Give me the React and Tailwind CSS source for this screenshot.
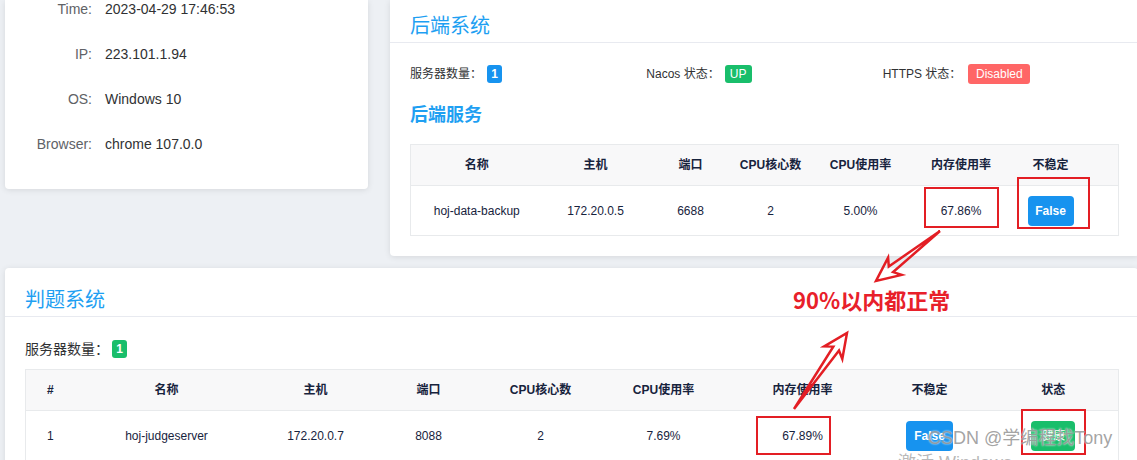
import React from 'react';

const font = "font-['Liberation_Sans','Noto_Sans_CJK_SC',sans-serif]";

// browser info rows of the left card
const clientInfo = [
  { label: 'Time:', value: '2023-04-29 17:46:53' },
  { label: 'IP:', value: '223.101.1.94' },
  { label: 'OS:', value: 'Windows 10' },
  { label: 'Browser:', value: 'chrome 107.0.0' }
];

const backendCols = [
  { title: '名称', w: 'w-[132px]' },
  { title: '主机', w: 'w-[106px]' },
  { title: '端口', w: 'w-[84px]' },
  { title: 'CPU核心数', w: 'w-[76px]' },
  { title: 'CPU使用率', w: 'w-[104px]' },
  { title: '内存使用率', w: 'w-[97px]' },
  { title: '不稳定', w: 'w-[82px]' },
  { title: '', w: 'w-[27px]' }
];

const judgeCols = [
  { title: '#', w: 'w-[45px]' },
  { title: '名称', w: 'w-[192px]' },
  { title: '主机', w: 'w-[106px]' },
  { title: '端口', w: 'w-[120px]' },
  { title: 'CPU核心数', w: 'w-[104px]' },
  { title: 'CPU使用率', w: 'w-[142px]' },
  { title: '内存使用率', w: 'w-[136px]' },
  { title: '不稳定', w: 'w-[118px]' },
  { title: '状态', w: 'w-[130px]' }
];

const Badge = ({ color, children, className = '' }) => (
  <span className={`inline-flex items-center justify-center rounded-[3px] text-[12px] leading-none text-white ${color} ${className}`}>
    {children}
  </span>
);

const CardTitle = ({ children, top }) => (
  <div className={`border-b border-[#e8eaf0] pl-[20px] pb-[6px] ${top}`}>
    <h2 className="text-[20px] leading-[20px] font-normal text-[#1e9ff2]">{children}</h2>
  </div>
);

const HeadCell = ({ children, className = '' }) => (
  <th className={`h-[41px] bg-[#f8f8f9] border-b border-[#e8eaec] text-[12px] font-bold text-[#17233d] text-center ${className}`}>
    {children}
  </th>
);

const BodyCell = ({ children, className = '' }) => (
  <td className={`h-[50px] text-[12px] text-[#17233d] text-center ${className}`}>{children}</td>
);

// hollow hand-drawn style arrow, tail -> tip
const arrowPoints = (tx, ty, px, py) => {
  const dx = px - tx;
  const dy = py - ty;
  const len = Math.hypot(dx, dy);
  const ux = dx / len;
  const uy = dy / len;
  const nx = -uy;
  const ny = ux;
  const L = 19;
  const w = 3.5;
  const h = 11;
  const bx = px - ux * L;
  const by = py - uy * L;
  const pts = [
    [tx, ty],
    [bx + nx * w, by + ny * w],
    [bx - ux * 5 + nx * h, by - uy * 5 + ny * h],
    [px, py],
    [bx - ux * 5 - nx * h, by - uy * 5 - ny * h],
    [bx - nx * w, by - ny * w]
  ];
  return pts.map(([x, y]) => `${x.toFixed(1)},${y.toFixed(1)}`).join(' ');
};

const App = () => {
  return (
    <div className={`relative w-[1137px] h-[460px] overflow-hidden bg-[#edf0f4] ${font}`}>
      <div className="w-[1133px] ml-[5px]">
        {/* top row */}
        <div className="flex items-start gap-[22px]">
          <div className="w-[363px] shrink-0 bg-white rounded-b-[4px] shadow-[0_1px_6px_rgba(0,0,0,0.1)] pl-[20px] pb-[36px] flex flex-col gap-[27px]">
            {clientInfo.map((row) => (
              <div key={row.label} className="flex items-center h-[18px] text-[14px] leading-[18px]">
                <span className="w-[67px] text-right text-[#606266]">{row.label}</span>
                <span className="ml-[13px] text-[#303133]">{row.value}</span>
              </div>
            ))}
          </div>

          <div className="flex-1 bg-white rounded-b-[4px] shadow-[0_1px_6px_rgba(0,0,0,0.1)] pb-[20px]">
            <CardTitle top="pt-[16px]">后端系统</CardTitle>
            <div className="px-[20px]">
              <div className="grid grid-cols-3 mt-[21px] h-[20px] text-[12px] text-[#303133]">
                <div className="flex items-center">
                  <span>服务器数量：</span>
                  <Badge color="bg-[#1793ef]" className="ml-[5px] w-[15px] h-[18px] font-bold">1</Badge>
                </div>
                <div className="flex items-center">
                  <span>Nacos 状态：</span>
                  <Badge color="bg-[#19be6b]" className="ml-[5px] w-[27px] h-[18px]">UP</Badge>
                </div>
                <div className="flex items-center">
                  <span>HTTPS 状态：</span>
                  <Badge color="bg-[#f66]" className="ml-[7px] w-[62px] h-[20px]">Disabled</Badge>
                </div>
              </div>

              <h3 className="mt-[22px] text-[18px] leading-[18px] font-bold text-[#1e9ff2]">后端服务</h3>

              <table className="mt-[20px] w-[708px] table-fixed border-collapse border border-[#e8eaec]">
                <colgroup>
                  {backendCols.map((c, i) => (
                    <col key={i} className={c.w} />
                  ))}
                </colgroup>
                <thead>
                  <tr>
                    {backendCols.map((c, i) => (
                      <HeadCell key={i}>{c.title}</HeadCell>
                    ))}
                  </tr>
                </thead>
                <tbody>
                  <tr>
                    <BodyCell>hoj-data-backup</BodyCell>
                    <BodyCell>172.20.0.5</BodyCell>
                    <BodyCell>6688</BodyCell>
                    <BodyCell>2</BodyCell>
                    <BodyCell>5.00%</BodyCell>
                    <BodyCell>67.86%</BodyCell>
                    <BodyCell>
                      <button className="w-[46px] h-[30px] rounded-[4px] bg-[#1793ef] text-white text-[12px] font-bold">False</button>
                    </BodyCell>
                    <BodyCell />
                  </tr>
                </tbody>
              </table>
            </div>
          </div>
        </div>

        {/* judge system */}
        <div className="mt-[12px] bg-white rounded-t-[4px] shadow-[0_1px_6px_rgba(0,0,0,0.1)] h-[200px]">
          <CardTitle top="pt-[22px]">判题系统</CardTitle>
          <div className="px-[20px]">
            <div className="mt-[23px] h-[18px] flex items-center text-[14px] text-[#303133]">
              <span>服务器数量：</span>
              <Badge color="bg-[#19be6b]" className="ml-[3px] w-[15px] h-[18px] font-bold">1</Badge>
            </div>
            <table className="mt-[11px] w-[1093px] table-fixed border-collapse border border-[#e8eaec]">
              <colgroup>
                {judgeCols.map((c, i) => (
                  <col key={i} className={c.w} />
                ))}
              </colgroup>
              <thead>
                <tr>
                  {judgeCols.map((c, i) => (
                    <HeadCell key={i} className={i === 0 ? 'text-left pl-[21px]' : ''}>{c.title}</HeadCell>
                  ))}
                </tr>
              </thead>
              <tbody>
                <tr>
                  <BodyCell className="text-left pl-[21px]">1</BodyCell>
                  <BodyCell>hoj-judgeserver</BodyCell>
                  <BodyCell>172.20.0.7</BodyCell>
                  <BodyCell>8088</BodyCell>
                  <BodyCell>2</BodyCell>
                  <BodyCell>7.69%</BodyCell>
                  <BodyCell>67.89%</BodyCell>
                  <BodyCell>
                    <button className="w-[47px] h-[30px] rounded-[4px] bg-[#1793ef] text-white text-[12px] font-bold">False</button>
                  </BodyCell>
                  <BodyCell>
                    <button className="w-[44px] h-[30px] rounded-[4px] bg-[#19be6b] text-white text-[12px]">健康</button>
                  </BodyCell>
                </tr>
              </tbody>
            </table>
          </div>
        </div>
      </div>

      {/* red annotations */}
      <div className="absolute left-[924px] top-[187px] w-[75px] h-[41px] border-2 border-[#e31e24]" />
      <div className="absolute left-[1017px] top-[177px] w-[73px] h-[52px] border-2 border-[#e31e24]" />
      <div className="absolute left-[756px] top-[416px] w-[75px] h-[39px] border-2 border-[#e31e24]" />
      <div className="absolute left-[1021px] top-[409px] w-[65px] h-[46px] border-2 border-[#e31e24]" />

      <svg className="absolute inset-0 pointer-events-none" width="1137" height="460">
        <polygon points={arrowPoints(940, 231, 876, 281)} fill="none" stroke="#e31e24" strokeWidth="2.5" strokeLinejoin="miter" />
        <polygon points={arrowPoints(794, 409, 847, 333)} fill="none" stroke="#e31e24" strokeWidth="2.5" strokeLinejoin="miter" />
      </svg>

      <div className="absolute left-[793px] top-[286px] text-[22px] leading-[26px] font-bold text-[#e8202a] font-['Noto_Sans_CJK_SC',sans-serif]">
        90%以内都正常
      </div>

      {/* watermarks */}
      <div className="absolute left-[928px] top-[427px] text-[18px] leading-[22px] text-[#8c8c8c]/80 [text-shadow:0_0_2px_#fff] whitespace-nowrap">
        CSDN @学编程找Tony
      </div>
      <div className="absolute left-[898px] top-[452px] text-[18px] leading-[22px] text-[#9a9a9a]/70 whitespace-nowrap">
        激活 Windows
      </div>
    </div>
  );
};

export default App;
